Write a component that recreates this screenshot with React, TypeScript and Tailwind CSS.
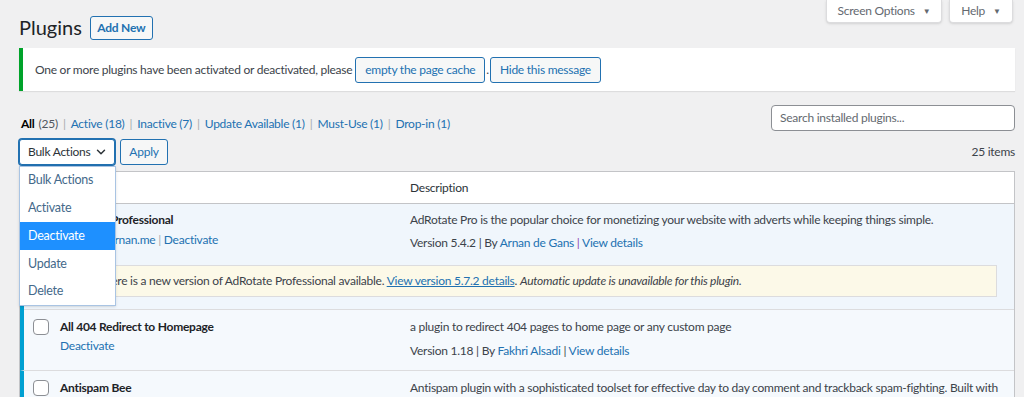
import { ChevronDown } from 'lucide-react';

const font = { fontFamily: 'Lato, "Open Sans", sans-serif' };

function Checkbox() {
  return <div className="w-[16px] h-[16px] rounded-[4px] border border-[#8c8f94] bg-white" />;
}

function Sep({ purple }: { purple?: boolean }) {
  return <span className={purple ? 'text-[#8e44ad]' : 'text-[#3c434a]'}> | </span>;
}

export default function App() {
  const filters = [
    { label: 'Active', count: '(18)' },
    { label: 'Inactive', count: '(7)' },
    { label: 'Update Available', count: '(1)' },
    { label: 'Must-Use', count: '(1)' },
    { label: 'Drop-in', count: '(1)' },
  ];

  return (
    <div
      className="relative w-[1024px] h-[397px] overflow-hidden bg-[#f0f0f1] text-[12px] tracking-[-0.25px] text-[#3c434a]"
      style={font}
    >
      {/* Screen meta tabs */}
      <div className="absolute top-0 right-[11px] flex gap-[7px]">
        <div className="w-[116px] h-[23px] bg-white border border-t-0 border-[#dcdcde] rounded-b-[4px] flex items-center justify-center gap-[8px] text-[#646970] shadow-sm">
          Screen Options <span className="text-[8px]">▼</span>
        </div>
        <div className="w-[64px] h-[23px] bg-white border border-t-0 border-[#dcdcde] rounded-b-[4px] flex items-center justify-center gap-[8px] text-[#646970] shadow-sm">
          Help <span className="text-[8px]">▼</span>
        </div>
      </div>

      <div className="pl-[19px] pr-[9px] pt-[15px]">
        {/* Heading */}
        <div className="flex items-center gap-[8px] h-[26px]">
          <h1 className="text-[20px] tracking-normal text-[#1d2327] leading-none pb-[2px]">Plugins</h1>
          <div className="h-[24px] w-[63px] flex items-center justify-center border border-[#2271b1] rounded-[3px] bg-[#f6f7f7] text-[#2271b1] font-bold">
            Add New
          </div>
        </div>

        {/* Notice */}
        <div className="mt-[7px] h-[43px] bg-white border-l-[4px] border-[#00a32a] shadow-[0_1px_1px_rgba(0,0,0,0.08)] flex items-center pl-[12px]">
          <span>One or more plugins have been activated or deactivated, please</span>
          <div className="ml-[3px] h-[26px] w-[130px] flex items-center justify-center border border-[#2271b1] rounded-[3px] bg-[#f6f7f7] text-[#2271b1]">
            empty the page cache
          </div>
          <span className="px-[1px]">.</span>
          <div className="h-[26px] w-[111px] flex items-center justify-center border border-[#2271b1] rounded-[3px] bg-[#f6f7f7] text-[#2271b1]">
            Hide this message
          </div>
        </div>

        {/* Filters + search */}
        <div className="mt-[14px] flex justify-between items-start">
          <div className="pt-[10px] flex items-center pl-[2px]">
            <span className="text-black font-bold">All</span>
            <span className="text-[#50575e] ml-[4px]">(25)</span>
            {filters.map((f) => (
              <span key={f.label} className="flex items-center">
                <span className="text-[#a7aaad] px-[5px]">|</span>
                <span className="text-[#2271b1]">
                  {f.label} {f.count}
                </span>
              </span>
            ))}
          </div>
          <div className="w-[244px] h-[26px] bg-white border border-[#8c8f94] rounded-[4px] flex items-center px-[8px] text-[#646970]">
            Search installed plugins...
          </div>
        </div>

        {/* Bulk actions */}
        <div className="mt-[6px] flex items-center justify-between">
          <div className="flex items-center gap-[5px]">
            <div className="w-[96px] h-[26px] bg-white border border-[#2271b1] rounded-[3px] shadow-[0_0_0_1px_#2271b1] flex items-center justify-between pl-[8px] pr-[6px] text-[#2c3338] whitespace-nowrap">
              Bulk Actions
              <ChevronDown size={14} strokeWidth={2.5} className="text-[#2c3338]" />
            </div>
            <div className="w-[48px] h-[26px] border border-[#2271b1] rounded-[3px] bg-[#f6f7f7] text-[#2271b1] flex items-center justify-center">
              Apply
            </div>
          </div>
          <span className="text-[#3c434a]">25 items</span>
        </div>

        {/* Table */}
        <div className="mt-[6px] w-[996px] border border-[#c3c4c7] bg-white overflow-hidden">
          {/* Header */}
          <div className="h-[32px] flex items-center border-b border-[#c3c4c7] text-[#2c3338]">
            <div className="w-[30px] shrink-0 pl-[13px]">
              <Checkbox />
            </div>
            <div className="w-[350px] shrink-0 pl-[10px]">Plugin</div>
            <div className="pl-[10px] pr-[9px]">Description</div>
          </div>

          {/* Row 1 */}
          <div className="bg-[#f0f6fc] border-l-[4px] border-[#00a0d2]">
            <div className="flex pt-[6px]">
              <div className="w-[26px] shrink-0 pl-[9px] pt-[2px]">
                <Checkbox />
              </div>
              <div className="w-[350px] shrink-0 pl-[10px]">
                <div className="font-bold text-[#1d2327] leading-[20px]">AdRotate Professional</div>
                <div className="text-[#2271b1] leading-[20px]">
                  Support <span className="text-[#a7aaad]">|</span> arnan.me <span className="text-[#a7aaad]">|</span> Deactivate
                </div>
              </div>
              <div className="pl-[10px]">
                <div className="leading-[20px] whitespace-nowrap">
                  AdRotate Pro is the popular choice for monetizing your website with adverts while keeping things simple.
                </div>
                <div className="leading-[20px] mt-[3px] whitespace-pre">
                  Version 5.4.2<Sep />By <span className="text-[#2271b1]">Arnan de Gans</span>
                  <Sep purple />
                  <span className="text-[#2271b1]">View details</span>
                </div>
              </div>
            </div>
            <div className="pt-[12px] pb-[12px] border-b border-[#dcdcde]">
              <div className="ml-[36px] mr-[17px] h-[32px] bg-[#fcf9e8] border border-[#dcdcde] border-l-[4px] border-l-[#dba617] flex items-center pl-[34px] text-[#3c434a] whitespace-nowrap">
                <span>
                  There is a new version of AdRotate Professional available.{' '}
                  <span className="text-[#2271b1] underline">View version 5.7.2 details</span>.{' '}
                  <em>Automatic update is unavailable for this plugin.</em>
                </span>
              </div>
            </div>
          </div>

          {/* Row 2 */}
          <div className="border-l-[4px] border-[#00a0d2] border-b border-b-[#dcdcde] flex h-[61px] pt-[7px] bg-[#f5f9fd]">
            <div className="w-[26px] shrink-0 pl-[9px] pt-[2px]">
              <Checkbox />
            </div>
            <div className="w-[350px] shrink-0 pl-[10px]">
              <div className="font-bold text-[#1d2327] leading-[20px]">All 404 Redirect to Homepage</div>
              <div className="text-[#2271b1] leading-[18px]">Deactivate</div>
            </div>
            <div className="pl-[10px]">
              <div className="leading-[20px]">a plugin to redirect 404 pages to home page or any custom page</div>
              <div className="leading-[20px] mt-[4px] whitespace-pre">
                Version 1.18<Sep />By <span className="text-[#2271b1]">Fakhri Alsadi</span>
                <Sep />
                <span className="text-[#2271b1]">View details</span>
              </div>
            </div>
          </div>

          {/* Row 3 */}
          <div className="border-l-[4px] border-[#00a0d2] flex h-[60px] pt-[7px] bg-[#f5f9fd]">
            <div className="w-[26px] shrink-0 pl-[9px] pt-[2px]">
              <Checkbox />
            </div>
            <div className="w-[350px] shrink-0 pl-[10px]">
              <div className="font-bold text-[#1d2327] leading-[20px]">Antispam Bee</div>
            </div>
            <div className="pl-[10px]">
              <div className="leading-[20px] whitespace-nowrap">
                Antispam plugin with a sophisticated toolset for effective day to day comment and trackback spam-fighting. Built with
              </div>
            </div>
          </div>
        </div>
      </div>

      {/* Open select dropdown */}
      <div className="absolute left-[19px] top-[166px] w-[97px] bg-white border border-[#a9c4e3] shadow-sm text-[#44698a] text-[12.5px]">
        <div className="h-[27px] pl-[8px] flex items-center">Bulk Actions</div>
        <div className="h-[28px] pl-[8px] flex items-center">Activate</div>
        <div className="h-[28px] pl-[8px] flex items-center bg-[#1e90ff] text-white">Deactivate</div>
        <div className="h-[28px] pl-[8px] flex items-center">Update</div>
        <div className="h-[27px] pl-[8px] flex items-center">Delete</div>
      </div>
    </div>
  );
}
